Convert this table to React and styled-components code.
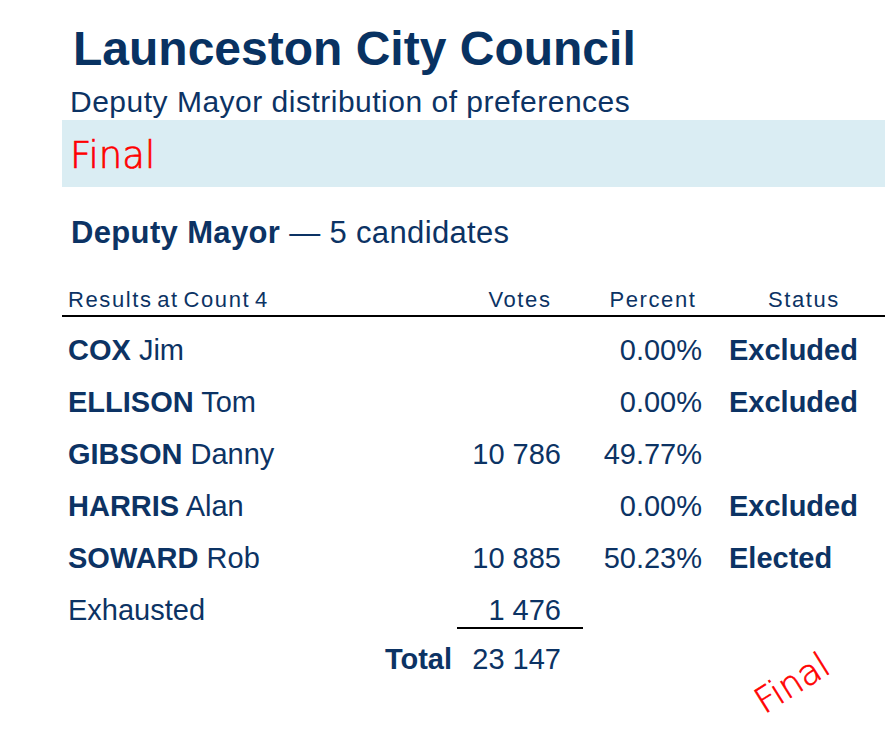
import React from 'react'
import styled, { createGlobalStyle } from 'styled-components'

const GlobalStyle = createGlobalStyle`
  html, body {
    margin: 0;
    padding: 0;
    background: #FFFFFF;
  }
  body {
    font-family: "Liberation Sans", Arial, sans-serif;
    color: #0c3364;
  }
`

const candidates = [
  { surname: 'COX', first: 'Jim', votes: '', percent: '0.00%', status: 'Excluded' },
  { surname: 'ELLISON', first: 'Tom', votes: '', percent: '0.00%', status: 'Excluded' },
  { surname: 'GIBSON', first: 'Danny', votes: '10 786', percent: '49.77%', status: '' },
  { surname: 'HARRIS', first: 'Alan', votes: '', percent: '0.00%', status: 'Excluded' },
  { surname: 'SOWARD', first: 'Rob', votes: '10 885', percent: '50.23%', status: 'Elected' },
]

const App = () => {
  return (
    <>
      <GlobalStyle />
      <Page>
        <Title>Launceston City Council</Title>
        <Subtitle>Deputy Mayor distribution of preferences</Subtitle>
        <Band>
          <BandText>Final</BandText>
        </Band>

        <Heading>
          <b>Deputy Mayor</b> — 5 candidates
        </Heading>

        <Table>
          <HeaderRow>
            <HeaderCell>Results at Count 4</HeaderCell>
            <HeaderCell $center>Votes</HeaderCell>
            <HeaderCell $center>Percent</HeaderCell>
            <HeaderCell $center>Status</HeaderCell>
          </HeaderRow>

          <Body>
            {candidates.map((c, key) => (
              <Row key={key}>
                <NameCell>
                  <b>{c.surname}</b> {c.first}
                </NameCell>
                <VotesCell>{c.votes}</VotesCell>
                <PercentCell>{c.percent}</PercentCell>
                <StatusCell>{c.status}</StatusCell>
              </Row>
            ))}

            <Row $height={45}>
              <NameCell>Exhausted</NameCell>
              <VotesCell $underline>1 476</VotesCell>
              <PercentCell />
              <StatusCell />
            </Row>

            <Row $line={60}>
              <NameCell $right>
                <b>Total</b>
              </NameCell>
              <VotesCell>23 147</VotesCell>
              <PercentCell />
              <StatusCell />
            </Row>
          </Body>
        </Table>

        <Stamp>Final</Stamp>
      </Page>
    </>
  )
}

const Page = styled.div`
  position: relative;
  margin-left: 62px;
  width: 823px;
  height: 750px;
  padding-top: 18px;
  box-sizing: border-box;
`

const Title = styled.h1`
  margin: 0;
  padding-left: 11px;
  font-size: 48px;
  line-height: 62px;
  font-weight: bold;
  color: #083262;
`

const Subtitle = styled.div`
  margin-top: 4px;
  padding-left: 8px;
  font-size: 30px;
  line-height: 36px;
  letter-spacing: 0.5px;
`

const Band = styled.div`
  height: 67px;
  box-sizing: border-box;
  padding: 4px 0 0 8px;
  background: #daedf3;
`

const BandText = styled.div`
  font-family: "DejaVu Sans", sans-serif;
  font-weight: 200;
  font-size: 37px;
  line-height: 63px;
  color: #ff0000;
  -webkit-text-stroke: 0.7px #ff0000;
`

const Heading = styled.div`
  margin-top: 26px;
  padding-left: 9px;
  font-size: 31px;
  line-height: 40px;
  letter-spacing: 0.35px;
`

const Table = styled.div`
  margin-top: 31px;
`

const Columns = styled.div`
  display: grid;
  grid-template-columns: 395px 126px 140px 1fr;
`

const HeaderRow = styled(Columns)`
  border-bottom: 2px solid #000000;
`

const HeaderCell = styled.div`
  padding-left: ${p => (p.$center ? '0' : '6px')};
  text-align: ${p => (p.$center ? 'center' : 'left')};
  font-size: 22px;
  line-height: 31px;
  letter-spacing: 1.6px;
  word-spacing: -3px;
  white-space: nowrap;
`

const Body = styled.div`
  padding-top: 7px;
`

const Row = styled(Columns)`
  grid-auto-rows: ${p => (p.$height ? `${p.$height}px` : 'auto')};
  font-size: 29px;
  line-height: ${p => (p.$line || 52)}px;
`

const NameCell = styled.div`
  padding: ${p => (p.$right ? '0 5px 0 0' : '0 0 0 6px')};
  text-align: ${p => (p.$right ? 'right' : 'left')};
  white-space: nowrap;
`

const VotesCell = styled.div`
  padding-right: 22px;
  text-align: right;
  white-space: nowrap;
  border-bottom: ${p => (p.$underline ? '2px solid #000000' : 'none')};
`

const PercentCell = styled.div`
  padding-right: 21px;
  text-align: right;
  white-space: nowrap;
`

const StatusCell = styled.div`
  padding-left: 6px;
  font-weight: bold;
  white-space: nowrap;
`

const Stamp = styled.div`
  position: absolute;
  left: 685px;
  top: 663px;
  width: 90px;
  font-family: "DejaVu Sans", sans-serif;
  font-weight: 200;
  font-size: 35px;
  line-height: 40px;
  text-align: center;
  color: #ff0000;
  -webkit-text-stroke: 0.6px #ff0000;
  transform: rotate(-32deg);
`

export default App
